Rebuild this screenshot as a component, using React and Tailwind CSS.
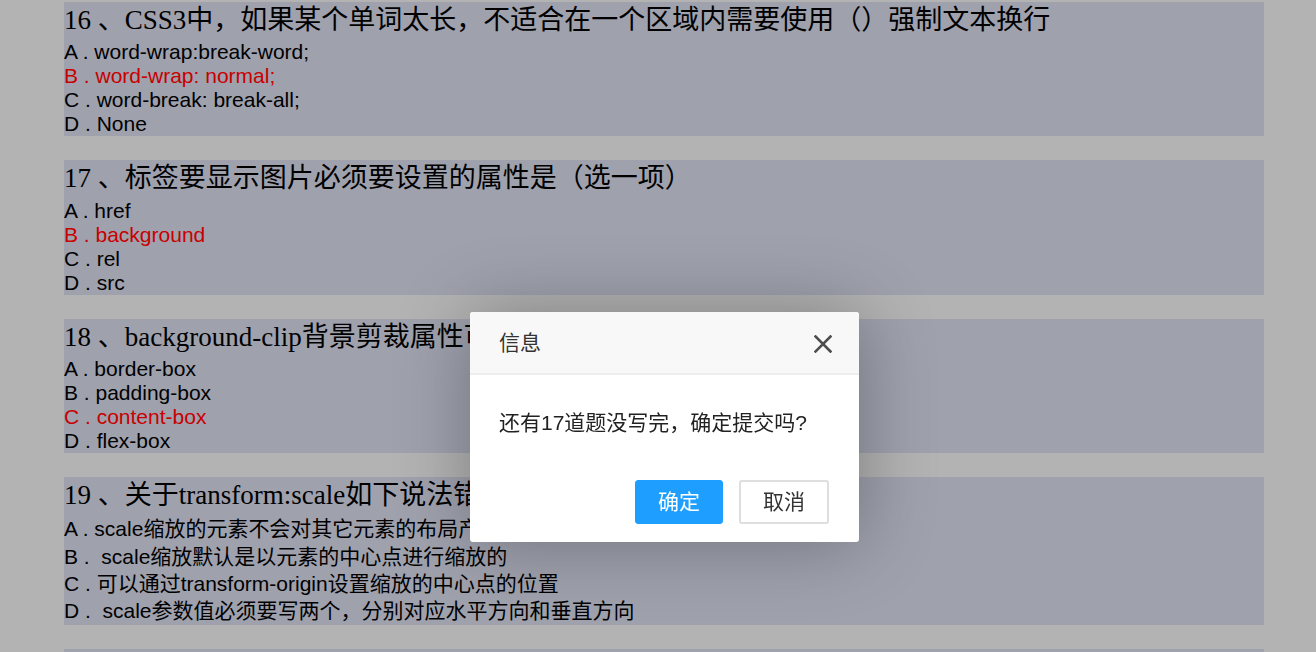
import React from "react";

const questions = [
    {
        no: 16,
        title: "CSS3中，如果某个单词太长，不适合在一个区域内需要使用（）强制文本换行",
        options: ["A . word-wrap:break-word;", "B . word-wrap: normal;", "C . word-break: break-all;", "D . None"],
        picked: 1,
    },
    {
        no: 17,
        title: "标签要显示图片必须要设置的属性是（选一项）",
        options: ["A . href", "B . background", "C . rel", "D . src"],
        picked: 1,
    },
    {
        no: 18,
        title: "background-clip背景剪裁属性可以取的值是（）",
        options: ["A . border-box", "B . padding-box", "C . content-box", "D . flex-box"],
        picked: 2,
    },
    {
        no: 19,
        title: "关于transform:scale如下说法错误的是（）",
        options: [
            "A . scale缩放的元素不会对其它元素的布局产生影响",
            "B .\u00a0 scale缩放默认是以元素的中心点进行缩放的",
            "C . 可以通过transform-origin设置缩放的中心点的位置",
            "D .\u00a0 scale参数值必须要写两个，分别对应水平方向和垂直方向",
        ],
        picked: -1,
        tall: true,
    },
    {
        no: 20,
        title: "下列选项中哪个属性可以设置过渡动画（）",
        options: ["A . transition", "B . animation", "C . transform", "D . translate"],
        picked: -1,
    },
];

function Question({ q }) {
    return (
        <div className="bg-[#9fa1ad] w-[1200px] shrink-0">
            <div className="h-[38.33px] pt-[2px] leading-[33px] text-[27px] text-black whitespace-nowrap font-['Liberation_Serif','Noto_Sans_CJK_SC',serif]">
                {q.no} 、{q.title}
            </div>
            <div className="text-[21px] font-['Liberation_Sans','Noto_Sans_CJK_SC',sans-serif]">
                {q.options.map((opt, i) => (
                    <div
                        key={i}
                        className={
                            (q.tall ? "h-[27.4px] leading-[27.4px] " : "h-[24px] leading-[24px] ") +
                            (i === q.picked ? "text-[#c80000]" : "text-black") +
                            " whitespace-nowrap"
                        }
                    >
                        {opt}
                    </div>
                ))}
            </div>
        </div>
    );
}

function ConfirmDialog() {
    return (
        <div className="fixed left-[470px] top-[312px] w-[389px] bg-white rounded-[3px] shadow-[1px_1px_75px_rgba(0,0,0,0.3)] font-['Liberation_Sans','Noto_Sans_CJK_SC',sans-serif]">
            <div className="relative h-[63px] bg-[#f8f8f8] border-b-2 border-[#eeeeee] rounded-t-[3px] pl-[29px] text-[21px] leading-[62px] text-[#333]">
                信息
                <button className="absolute right-[27px] top-[23px] w-[18px] h-[18px]">
                    <svg viewBox="0 0 18 18" width="18" height="18">
                        <path d="M1.5 1.5 L16.5 16.5 M16.5 1.5 L1.5 16.5" stroke="#4d4d4d" strokeWidth="2.6" strokeLinecap="square" fill="none" />
                    </svg>
                </button>
            </div>
            <div className="px-[29px] py-[30px] text-[21px] leading-[36px] text-[#222]">
                还有17道题没写完，确定提交吗?
            </div>
            <div className="flex justify-end gap-[16px] mt-[9px] pr-[30px] pb-[18px]">
                <button className="h-[44px] px-[22px] bg-[#1e9fff] border border-[#1e9fff] rounded-[3px] text-white text-[21px] leading-[42px]">
                    确定
                </button>
                <button className="h-[44px] px-[22px] bg-white border-2 border-[#dedede] rounded-[3px] text-[#333] text-[21px] leading-[40px]">
                    取消
                </button>
            </div>
        </div>
    );
}

export default function App() {
    return (
        <div className="h-[652px] overflow-hidden bg-[#b3b3b3]">
            <div className="flex flex-col gap-[24px] pt-[2px] pl-[64px]">
                {questions.map((q) => (
                    <Question key={q.no} q={q} />
                ))}
            </div>
            <ConfirmDialog />
        </div>
    );
}
